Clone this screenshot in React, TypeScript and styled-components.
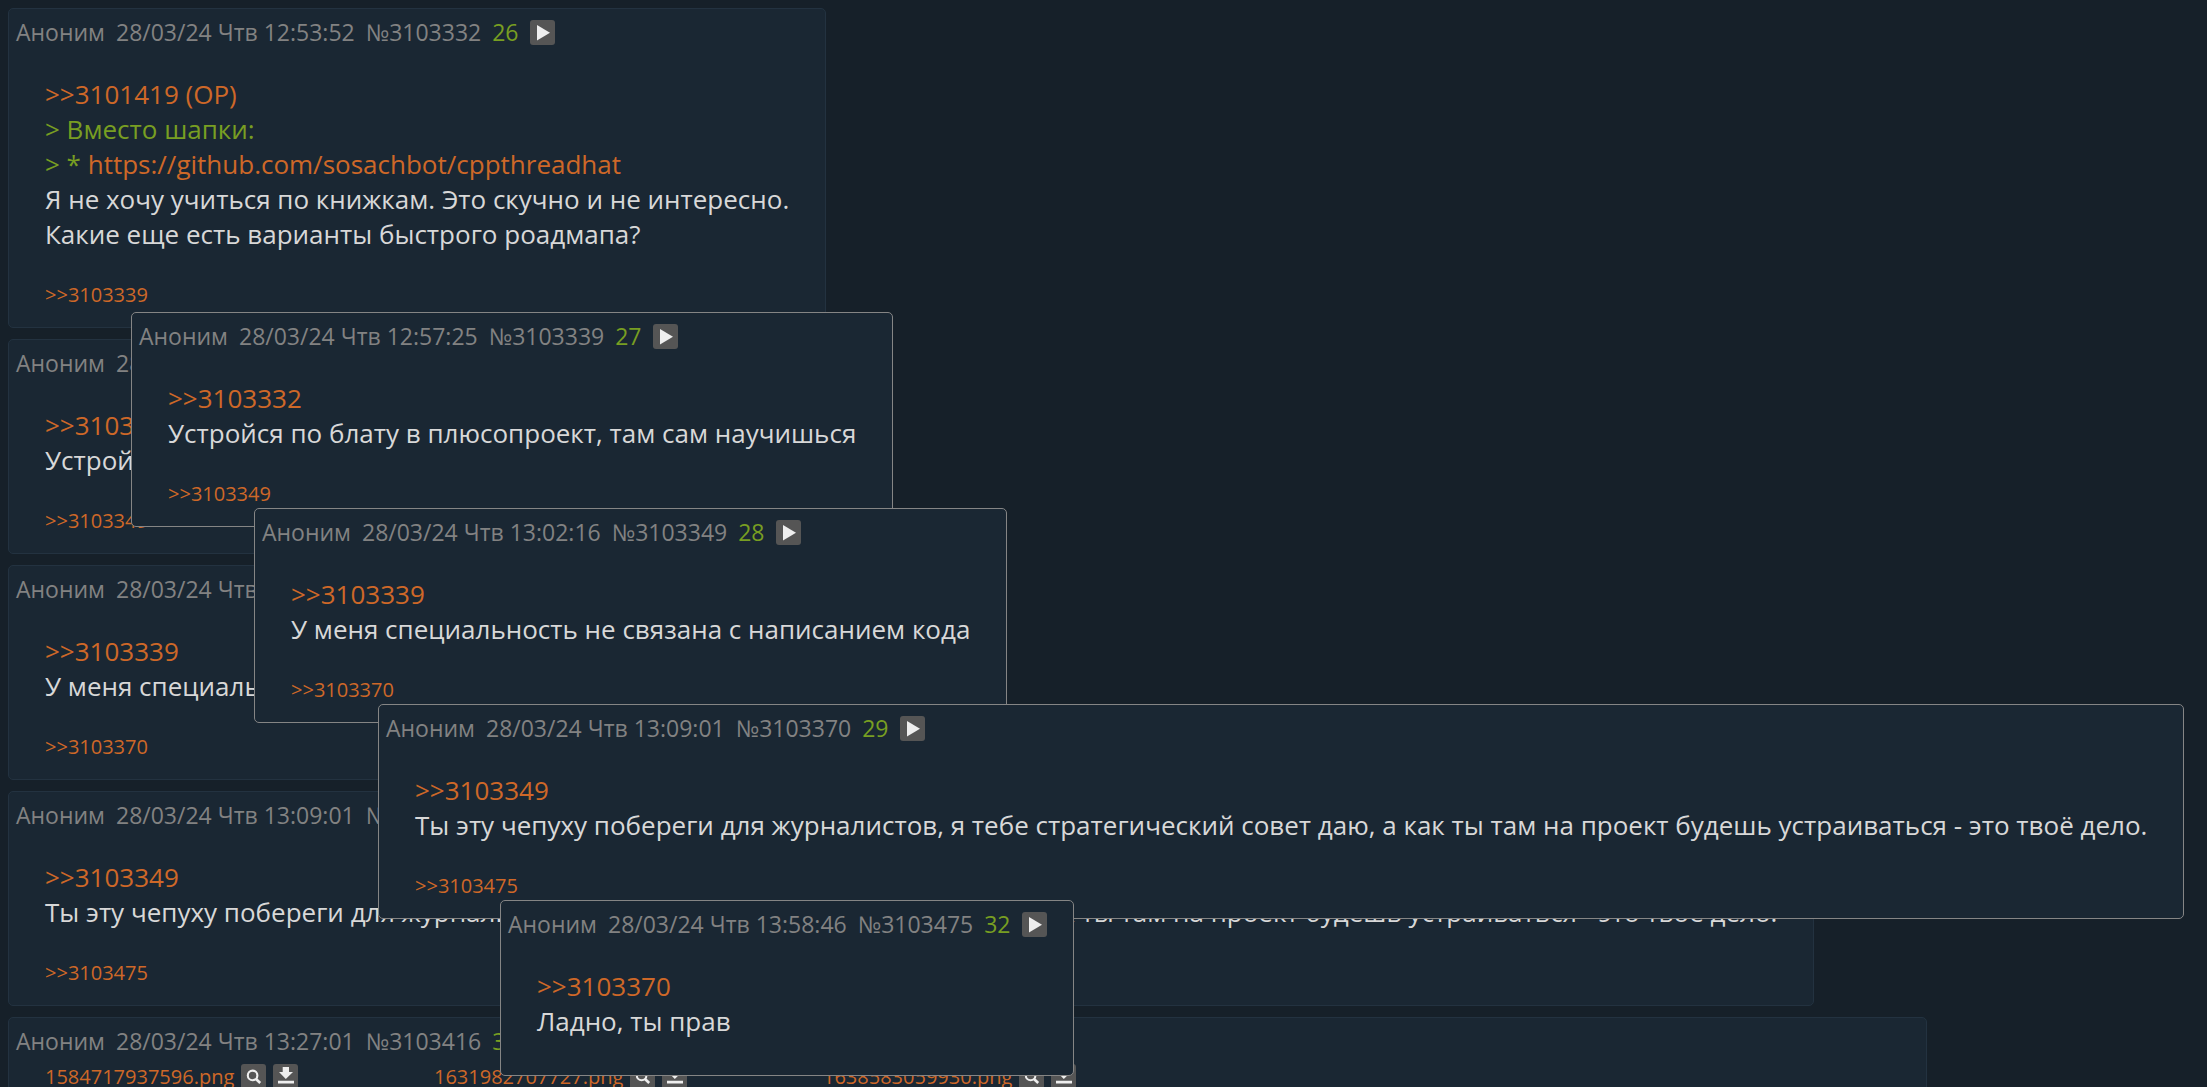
import React from "react";
import styled, { createGlobalStyle, css } from "styled-components";

const GlobalStyle = createGlobalStyle`
  * {
    box-sizing: border-box;
  }
  body {
    margin: 0;
    background: #162029;
    color: #d8d8d8;
    font-family: "Trebuchet MS", "Open Sans", "Noto Sans", sans-serif;
  }
`;

const Thread = styled.main`
  position: relative;
  display: flex;
  flex-direction: column;
  align-items: flex-start;
  gap: 11px;
  height: 100vh;
  padding: 8px;
  overflow: hidden;
`;

const PostCard = styled.article<{ $wide?: boolean }>`
  flex: none;
  width: ${(p) => (p.$wide ? "100%" : "auto")};
  max-width: ${(p) => (p.$wide ? "1919px" : "none")};
  padding: 11px 0 19px;
  background: #1a2733;
  border: 1px solid #233240;
  border-radius: 5px;
`;

const PopupCard = styled(PostCard)<{ $x: number; $y: number }>`
  ${(p) => css`
    position: absolute;
    left: ${p.$x}px;
    top: ${p.$y}px;
  `}
  border-color: #858585;
`;

const Header = styled.header`
  display: flex;
  align-items: center;
  gap: 11px;
  height: 25px;
  padding: 0 26px 0 7px;
  color: #828282;
  font-size: 23px;
  line-height: 25px;
  white-space: nowrap;
`;

const HeaderLink = styled.a`
  color: inherit;
  text-decoration: none;
`;

const Order = styled.span`
  color: #789e22;
`;

const IconButton = styled.button`
  display: block;
  flex: none;
  width: 25px;
  height: 25px;
  padding: 0;
  border: 0;
  border-radius: 3px;
  background: #555555;
  color: #eeeeee;
  cursor: pointer;

  svg {
    display: block;
  }
`;

const Files = styled.div`
  display: grid;
  grid-template-columns: repeat(3, 389px);
  height: 320px;
  padding: 10px 36px 0;
`;

const File = styled.div`
  display: flex;
  align-items: center;
  gap: 7px;
  height: 25px;
  font-size: 20px;
  line-height: 27px;
`;

const Message = styled.div`
  margin: 32px 36px 17px;
  font-size: 26px;
  line-height: 35px;
`;

const Line = styled.p<{ $quote?: boolean }>`
  margin: 0;
  color: ${(p) => (p.$quote ? "#789e22" : "inherit")};
`;

const Link = styled.a`
  color: #ce6828;
  text-decoration: none;
`;

const Replies = styled.div`
  margin: 29px 36px 0;
  font-size: 20px;
  line-height: 27px;
`;

const PlayIcon = () => (
  <svg width="25" height="25" viewBox="0 0 25 25" aria-hidden="true">
    <path d="M7 5v15.5L20 12.7z" fill="currentColor" />
  </svg>
);

const SearchIcon = () => (
  <svg width="25" height="25" viewBox="0 0 25 25" fill="none" stroke="currentColor" aria-hidden="true">
    <circle cx="11.6" cy="11.4" r="4.8" strokeWidth="2.1" />
    <path d="M15 15l4.2 4" strokeWidth="2.6" />
  </svg>
);

const DownloadIcon = () => (
  <svg width="25" height="25" viewBox="0 0 25 25" fill="currentColor" aria-hidden="true">
    <path d="M9.7 3h6.3v5h4l-7.2 7L6 8h3.7zM5 16.8h16v2.6H5z" />
  </svg>
);

interface Post {
  id: string;
  time: string;
  order: number;
  target?: string;
  quote?: React.ReactNode;
  text: string[];
  reply?: string;
  files?: string[];
}

const posts: Post[] = [
  {
    id: "3103332",
    time: "12:53:52",
    order: 26,
    target: "3101419 (OP)",
    quote: (
      <>
        <Line $quote>&gt; Вместо шапки:</Line>
        <Line $quote>
          &gt; * <Link href="#hat">https://github.com/sosachbot/cppthreadhat</Link>
        </Line>
      </>
    ),
    text: [
      "Я не хочу учиться по книжкам. Это скучно и не интересно.",
      "Какие еще есть варианты быстрого роадмапа?",
    ],
    reply: "3103339",
  },
  {
    id: "3103339",
    time: "12:57:25",
    order: 27,
    target: "3103332",
    text: ["Устройся по блату в плюсопроект, там сам научишься"],
    reply: "3103349",
  },
  {
    id: "3103349",
    time: "13:02:16",
    order: 28,
    target: "3103339",
    text: ["У меня специальность не связана с написанием кода"],
    reply: "3103370",
  },
  {
    id: "3103370",
    time: "13:09:01",
    order: 29,
    target: "3103349",
    text: [
      "Ты эту чепуху побереги для журналистов, я тебе стратегический совет даю, а как ты там на проект будешь устраиваться - это твоё дело.",
    ],
    reply: "3103475",
  },
  {
    id: "3103416",
    time: "13:27:01",
    order: 30,
    text: [],
    files: ["1584717937596.png", "1631982707727.png", "1638583059930.png"],
  },
];

const lastReply: Post = {
  id: "3103475",
  time: "13:58:46",
  order: 32,
  target: "3103370",
  text: ["Ладно, ты прав"],
};

const popups = [
  { post: posts[1], x: 131, y: 312 },
  { post: posts[2], x: 254, y: 508 },
  { post: posts[3], x: 378, y: 704 },
  { post: lastReply, x: 500, y: 900 },
];

const PostContent = ({ post }: { post: Post }) => (
  <>
    <Header>
      <span>Аноним</span>
      <time>28/03/24 Чтв {post.time}</time>
      <HeaderLink href={`#${post.id}`}>№{post.id}</HeaderLink>
      <Order>{post.order}</Order>
      <IconButton type="button" aria-label="Меню поста">
        <PlayIcon />
      </IconButton>
    </Header>
    {post.files && (
      <Files>
        {post.files.map((name) => (
          <File key={name}>
            <Link href={`#${name}`}>{name}</Link>
            <IconButton type="button" aria-label="Найти изображение">
              <SearchIcon />
            </IconButton>
            <IconButton type="button" aria-label="Скачать">
              <DownloadIcon />
            </IconButton>
          </File>
        ))}
      </Files>
    )}
    {post.target && (
      <Message>
        <Line>
          <Link href={`#${post.target}`}>&gt;&gt;{post.target}</Link>
        </Line>
        {post.quote}
        {post.text.map((line) => (
          <Line key={line}>{line}</Line>
        ))}
      </Message>
    )}
    {post.reply && (
      <Replies>
        <Link href={`#${post.reply}`}>&gt;&gt;{post.reply}</Link>
      </Replies>
    )}
  </>
);

export default function App() {
  return (
    <>
      <GlobalStyle />
      <Thread>
        {posts.map((post) => (
          <PostCard key={post.id} id={post.id} $wide={Boolean(post.files)}>
            <PostContent post={post} />
          </PostCard>
        ))}
        {popups.map(({ post, x, y }) => (
          <PopupCard key={post.id} $x={x} $y={y}>
            <PostContent post={post} />
          </PopupCard>
        ))}
      </Thread>
    </>
  );
}
